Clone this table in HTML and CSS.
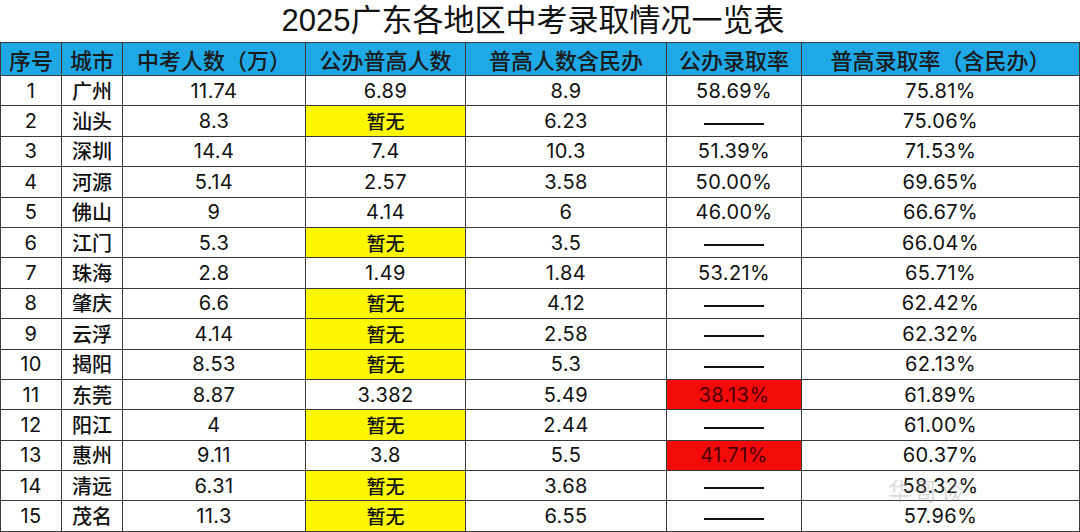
FILE: index.html
```html
<!DOCTYPE html>
<html lang="zh-CN">
<head>
<meta charset="utf-8">
<title>2025广东各地区中考录取情况一览表</title>
<link rel="stylesheet" href="styles.css">
</head>
<body>
<div class="page">
  <h1 class="title">2025广东各地区中考录取情况一览表</h1>
  <table class="grid">
    <colgroup>
      <col class="c1"><col class="c2"><col class="c3"><col class="c4"><col class="c5"><col class="c6"><col class="c7">
    </colgroup>
    <thead>
      <tr><th>序号</th><th>城市</th><th>中考人数（万）</th><th>公办普高人数</th><th>普高人数含民办</th><th>公办录取率</th><th>普高录取率（含民办）</th></tr>
    </thead>
    <tbody>
      <tr><td>1</td><td class="city">广州</td><td>11.74</td><td>6.89</td><td>8.9</td><td>58.69%</td><td>75.81%</td></tr>
      <tr><td>2</td><td class="city">汕头</td><td>8.3</td><td class="na">暂无</td><td>6.23</td><td><span class="dash"></span></td><td>75.06%</td></tr>
      <tr><td>3</td><td class="city">深圳</td><td>14.4</td><td>7.4</td><td>10.3</td><td>51.39%</td><td>71.53%</td></tr>
      <tr><td>4</td><td class="city">河源</td><td>5.14</td><td>2.57</td><td>3.58</td><td>50.00%</td><td>69.65%</td></tr>
      <tr><td>5</td><td class="city">佛山</td><td>9</td><td>4.14</td><td>6</td><td>46.00%</td><td>66.67%</td></tr>
      <tr><td>6</td><td class="city">江门</td><td>5.3</td><td class="na">暂无</td><td>3.5</td><td><span class="dash"></span></td><td>66.04%</td></tr>
      <tr><td>7</td><td class="city">珠海</td><td>2.8</td><td>1.49</td><td>1.84</td><td>53.21%</td><td>65.71%</td></tr>
      <tr><td>8</td><td class="city">肇庆</td><td>6.6</td><td class="na">暂无</td><td>4.12</td><td><span class="dash"></span></td><td>62.42%</td></tr>
      <tr><td>9</td><td class="city">云浮</td><td>4.14</td><td class="na">暂无</td><td>2.58</td><td><span class="dash"></span></td><td>62.32%</td></tr>
      <tr><td>10</td><td class="city">揭阳</td><td>8.53</td><td class="na">暂无</td><td>5.3</td><td><span class="dash"></span></td><td>62.13%</td></tr>
      <tr><td>11</td><td class="city">东莞</td><td>8.87</td><td>3.382</td><td>5.49</td><td class="low">38.13%</td><td>61.89%</td></tr>
      <tr><td>12</td><td class="city">阳江</td><td>4</td><td class="na">暂无</td><td>2.44</td><td><span class="dash"></span></td><td>61.00%</td></tr>
      <tr><td>13</td><td class="city">惠州</td><td>9.11</td><td>3.8</td><td>5.5</td><td class="low">41.71%</td><td>60.37%</td></tr>
      <tr><td>14</td><td class="city">清远</td><td>6.31</td><td class="na">暂无</td><td>3.68</td><td><span class="dash"></span></td><td>58.32%</td></tr>
      <tr><td>15</td><td class="city">茂名</td><td>11.3</td><td class="na">暂无</td><td>6.55</td><td><span class="dash"></span></td><td>57.96%</td></tr>
    </tbody>
  </table>
  <div class="watermark">华哥谈</div>
</div>
</body>
</html>
```

FILE: styles.css
```css
* { box-sizing: border-box; }
html, body { margin: 0; padding: 0; background: #fff; }
body {
  font-family: Inter, "Noto Sans CJK SC", sans-serif;
  color: #111;
}
.page {
  position: relative;
  width: 1080px;
  height: 532px;
  overflow: hidden;
}
.title {
  margin: 0;
  height: 42px;
  font-family: "Liberation Sans", "Noto Sans CJK SC", sans-serif;
  font-size: 31px;
  font-weight: 400;
  line-height: 42px;
  text-align: center;
  padding-right: 14px;
}
.grid {
  border-collapse: collapse;
  table-layout: fixed;
  width: 1079px;
}
.c1 { width: 61px; }
.c2 { width: 61px; }
.c3 { width: 183px; }
.c4 { width: 160px; }
.c5 { width: 201px; }
.c6 { width: 135px; }
.c7 { width: 278px; }
.grid th, .grid td {
  border: 1px solid #3a3a3a;
  text-align: center;
  padding: 0;
  white-space: nowrap;
  overflow: hidden;
}
.grid th {
  height: 33px;
  background: #1ea8e6;
  font-family: "Noto Sans CJK SC", sans-serif;
  font-weight: 500;
  font-size: 22px;
  color: #1a1a1a;
  line-height: 31px;
}
.grid td {
  height: 30.4px;
  font-size: 20px;
  letter-spacing: 0.4px;
  line-height: 28px;
  color: #111;
}
.grid td.city {
  font-family: "Noto Sans CJK SC", sans-serif;
  font-weight: 500;
  font-size: 20px;
  letter-spacing: 0;
}
.grid td.na {
  background: #fdf800;
  font-family: "Noto Sans CJK SC", sans-serif;
  font-weight: 500;
  font-size: 19px;
  letter-spacing: 0;
}
.grid td.low {
  background: #f50a0a;
  color: #4a0000;
}
.dash {
  display: inline-block;
  width: 60px;
  height: 2px;
  background: #111;
  vertical-align: middle;
  position: relative;
  top: 1px;
}
.watermark {
  position: absolute;
  left: 888px;
  top: 472px;
  font-family: "Noto Sans CJK SC", sans-serif;
  font-size: 24px;
  color: rgba(150, 150, 150, 0.35);
  letter-spacing: 2px;
  pointer-events: none;
}
```
